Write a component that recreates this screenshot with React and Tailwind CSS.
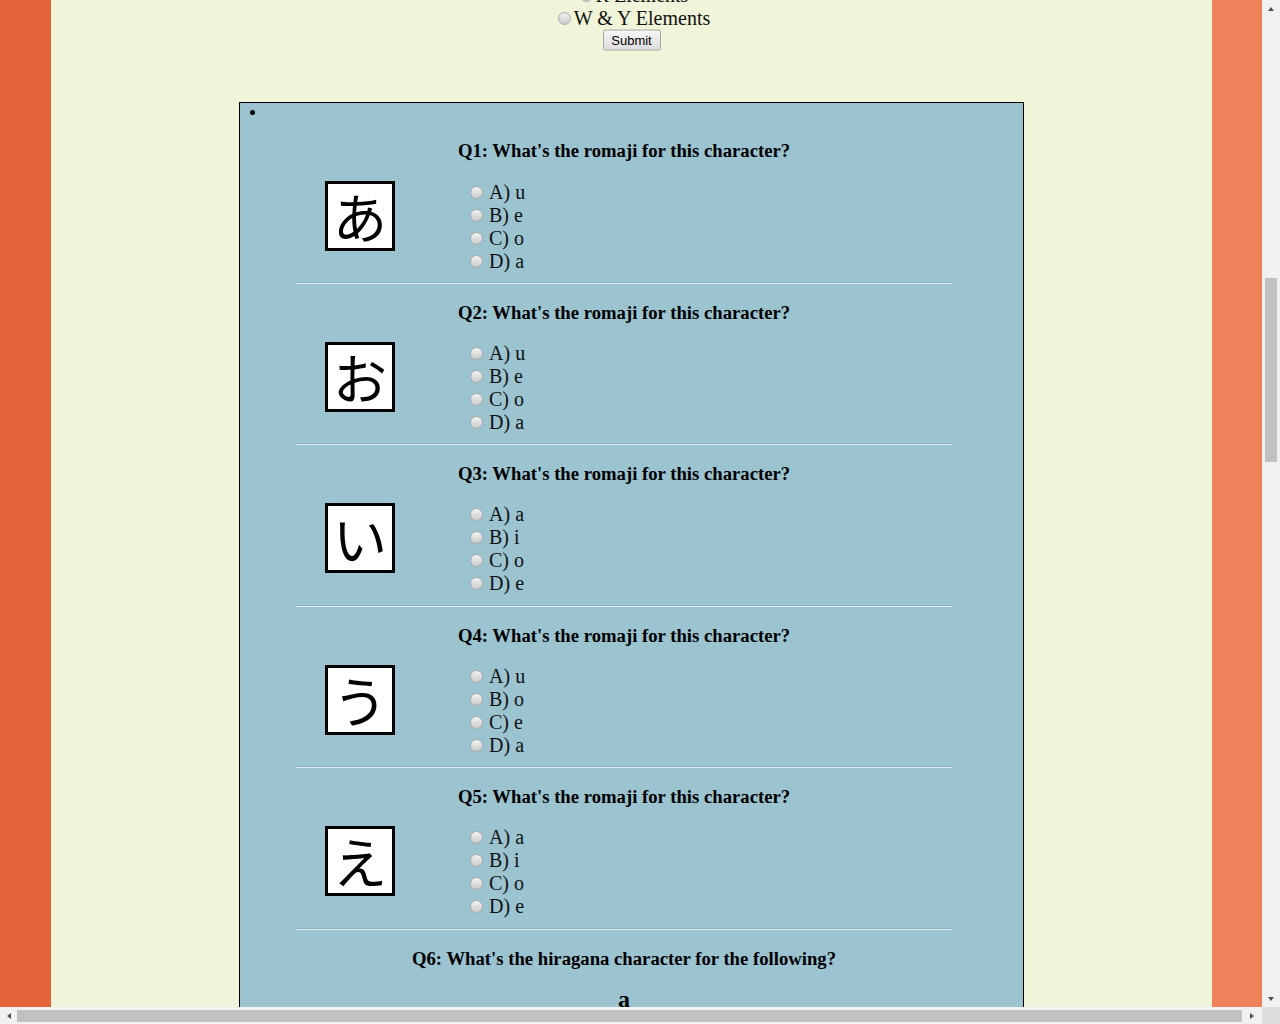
import React from "react";

const questions = [
  { n: 1, kana: "あ", opts: ["u", "e", "o", "a"] },
  { n: 2, kana: "お", opts: ["u", "e", "o", "a"] },
  { n: 3, kana: "い", opts: ["a", "i", "o", "e"] },
  { n: 4, kana: "う", opts: ["u", "o", "e", "a"] },
  { n: 5, kana: "え", opts: ["a", "i", "o", "e"] },
];

const letters = ["A", "B", "C", "D"];

function Radio() {
  return (
    <span className="block size-[13px] shrink-0 rounded-full border border-[#aaaaaa] bg-linear-to-b from-[#f2f2f2] to-[#cbcbcb]" />
  );
}

function Rule() {
  return <div className="h-[2px] border-t border-b border-t-[#8fb0bb] border-b-[#dfeaee]" />;
}

function Question({ q, first }) {
  return (
    <div>
      <div className="mt-[18px] h-[21px] text-center text-[18.7px] font-bold leading-[21px] text-black">
        Q{q.n}: What's the romaji for this character?
      </div>
      <div className={`${first ? "mt-[20px]" : "mt-[19px]"} flex items-start`}>
        <div className="ml-[30px] flex size-[70px] items-center justify-center border-[3px] border-black bg-white">
          <span className="font-['Noto_Sans_CJK_JP',sans-serif] text-[54px] leading-none text-black">{q.kana}</span>
        </div>
        <div className="ml-[75px] flex flex-col">
          {q.opts.map((o, i) => (
            <div key={i} className="flex h-[23px] items-center text-[20px] leading-[23px] text-[#111]">
              <Radio />
              <span className="ml-[6px]">
                {letters[i]}) {o}
              </span>
            </div>
          ))}
        </div>
      </div>
      <div className={first ? "h-[8.5px]" : "h-[9.5px]"} />
      <Rule />
    </div>
  );
}

function Arrow({ dir }) {
  const pts = {
    up: "1,6 4,2 7,6",
    down: "1,2 4,6 7,2",
    left: "6,1 2,4 6,7",
    right: "2,1 6,4 2,7",
  }[dir];
  return (
    <svg width="8" height="8" viewBox="0 0 8 8">
      <polygon points={pts} fill="#505050" />
    </svg>
  );
}

export default function App() {
  return (
    <div className="flex h-[1024px] w-[1280px] flex-col overflow-hidden font-['Liberation_Serif',serif]">
      <div className="flex h-[1007px]">
        <div className="flex w-[1262px] overflow-hidden">
          <div className="w-[51px] shrink-0 bg-[#e4643a]" />
          <div className="w-[1161px] shrink-0 bg-[#f0f4d8]">
            <div className="-mt-[16.5px]">
              <div className="flex h-[23px] items-center justify-center text-[20px] leading-[23px] text-[#111]">
                <span className="ml-[5px] mr-[3px]"><Radio /></span>
                <span>R Elements</span>
              </div>
              <div className="flex h-[23px] items-center justify-center text-[20px] leading-[23px] text-[#111]">
                <span className="ml-[5px] mr-[3px]"><Radio /></span>
                <span>W &amp; Y Elements</span>
              </div>
              <div className="flex justify-center">
                <button className="h-[21px] w-[58px] -translate-y-[0.5px] rounded-[2px] border border-[#a6a6a6] bg-linear-to-b from-[#f6f6f6] to-[#dedede] font-['Liberation_Sans',sans-serif] text-[13px] leading-none text-black">
                  Submit
                </button>
              </div>
            </div>

            <div className="mx-auto mt-[51px] w-[785px] border border-black bg-[#9bc3d0] pb-[40px]">
              <div className="h-[18px] pl-[10px] pt-[7px]">
                <span className="block size-[5px] rounded-full bg-black" />
              </div>
              <div className="ml-[55px] w-[658px] pt-[1.5px]">
                {questions.map((q) => (
                  <Question key={q.n} q={q} first={q.n === 1} />
                ))}
                <div className="mt-[18px] h-[21px] text-center text-[18.7px] font-bold leading-[21px] text-black">
                  Q6: What's the hiragana character for the following?
                </div>
                <div className="mt-[16px] text-center text-[24px] font-bold leading-[28px] text-black">a</div>
              </div>
            </div>
          </div>
          <div className="w-[50px] shrink-0 bg-[#ee825a]" />
        </div>

        <div className="flex w-[18px] flex-col bg-[#f1f1f1]">
          <div className="flex h-[17px] items-center justify-center">
            <Arrow dir="up" />
          </div>
          <div className="flex-1 px-[3px]">
            <div className="mt-[261px] h-[184px] w-[12px] bg-[#c1c1c1]" />
          </div>
          <div className="flex h-[17px] items-center justify-center">
            <Arrow dir="down" />
          </div>
        </div>
      </div>

      <div className="flex h-[17px]">
        <div className="flex w-[1262px] items-center bg-[#f1f1f1]">
          <div className="flex h-[17px] w-[17px] items-center justify-center">
            <Arrow dir="left" />
          </div>
          <div className="h-[12px] w-[1225px] bg-[#c1c1c1]" />
          <div className="flex h-[17px] flex-1 items-center justify-center">
            <Arrow dir="right" />
          </div>
        </div>
        <div className="flex-1 bg-[#dcdcdc]" />
      </div>
    </div>
  );
}
